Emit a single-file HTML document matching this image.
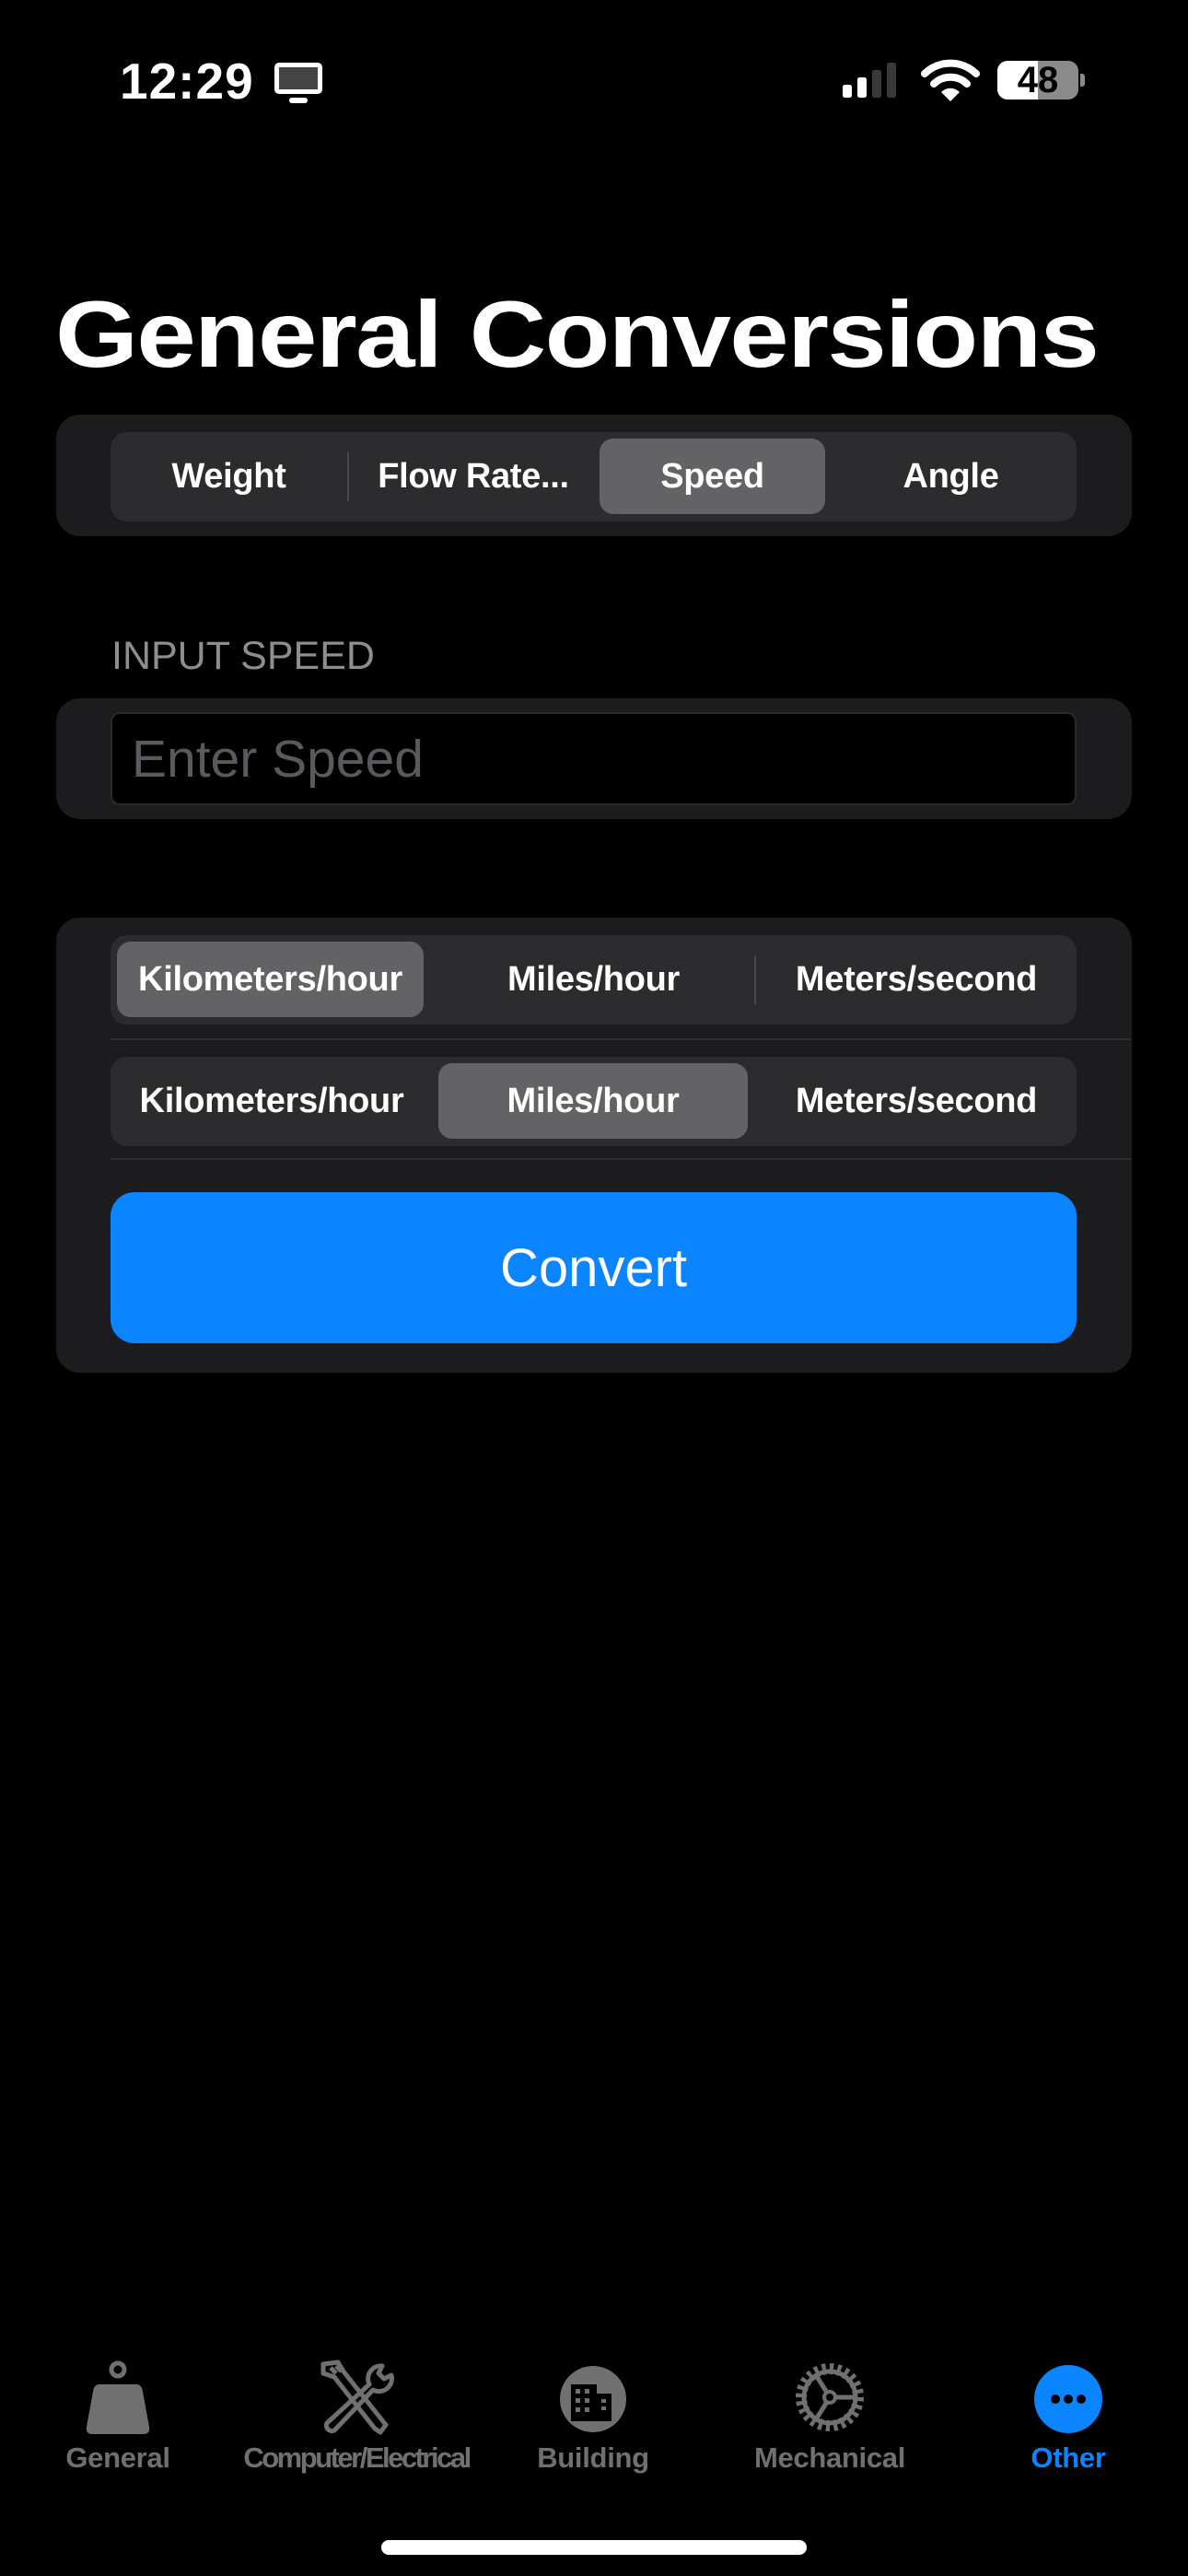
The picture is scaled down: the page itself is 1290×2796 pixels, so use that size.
<!DOCTYPE html>
<html><head><meta charset="utf-8"><style>
*{margin:0;padding:0;box-sizing:border-box}
body{width:1290px;height:2796px;background:#000;font-family:"Liberation Sans",sans-serif;color:#fff;position:relative;overflow:hidden}
.abs{position:absolute}
.card{position:absolute;left:61px;width:1168px;background:#1c1c1e;border-radius:26px}
.seg{position:absolute;left:120px;width:1049px;background:#2c2c2e;border-radius:18px}
.sel{position:absolute;background:#636366;border-radius:15px}
.lbl{position:absolute;top:0;height:100%;display:flex;align-items:center;justify-content:center;font-size:38px;font-weight:bold;letter-spacing:-0.3px;white-space:nowrap}
.div{position:absolute;width:2px;background:#48484a}
.tab{position:absolute;top:2650px;font-size:31px;font-weight:bold;color:#707070;transform:translateX(-50%);white-space:nowrap;letter-spacing:-0.3px}
</style></head><body>
<div class="abs" style="left:130px;top:56px;font-size:55px;font-weight:bold;letter-spacing:1px">12:29</div>
<svg class="abs" style="left:296px;top:66px" width="56" height="48" viewBox="0 0 56 48"><rect x="2" y="2" width="52" height="34" rx="5" fill="#fff"/><rect x="7" y="7" width="42" height="24" fill="#444"/><rect x="18" y="40" width="20" height="6" rx="3" fill="#fff"/></svg>
<svg class="abs" style="left:913px;top:68px" width="70" height="40"><rect x="2" y="24" width="10" height="14" rx="2.5" fill="#fff"/><rect x="18" y="16" width="10" height="22" rx="2.5" fill="#fff"/><rect x="34" y="8" width="10" height="30" rx="2.5" fill="#3a3a3a"/><rect x="50" y="0" width="10" height="38" rx="2.5" fill="#3a3a3a"/></svg>
<svg class="abs" style="left:1000px;top:64px" width="64" height="48" viewBox="0 0 64 48"><path d="M4 16 A40 40 0 0 1 60 16" stroke="#fff" stroke-width="8" fill="none" stroke-linecap="round"/><path d="M14 27 A26 26 0 0 1 50 27" stroke="#fff" stroke-width="8" fill="none" stroke-linecap="round"/><path d="M32 46 L22 36 A14 14 0 0 1 42 36 Z" fill="#fff"/></svg>
<div class="abs" style="left:1083px;top:66px;width:88px;height:42px;border-radius:11px;background:#8a8a8a;overflow:hidden"><div style="width:44px;height:42px;background:#fff"></div></div>
<div class="abs" style="left:1083px;top:66px;width:88px;height:42px;font-size:40px;font-weight:bold;color:#000;text-align:center;line-height:42px">48</div>
<div class="abs" style="left:1173px;top:80px;width:5px;height:14px;border-radius:0 3px 3px 0;background:#8a8a8a"></div>

<div class="abs" style="left:60px;top:303px;font-size:102px;font-weight:bold;letter-spacing:-1.5px;line-height:120px;white-space:nowrap;transform:scaleX(1.135);transform-origin:0 0">General Conversions</div>

<div class="card" style="top:450px;height:132px"></div>
<div class="seg" style="top:469px;height:97px">
 <div class="sel" style="left:531px;top:7px;width:245px;height:82px"></div>
 <div class="div" style="left:257px;top:22px;height:53px"></div>
 <div class="lbl" style="left:0;width:257px">Weight</div>
 <div class="lbl" style="left:259px;width:270px">Flow Rate...</div>
 <div class="lbl" style="left:531px;width:245px">Speed</div>
 <div class="lbl" style="left:776px;width:273px">Angle</div>
</div>

<div class="abs" style="left:121px;top:688px;font-size:43px;color:#8d8d92">INPUT SPEED</div>
<div class="card" style="top:758px;height:131px"></div>
<div class="abs" style="left:120px;top:773px;width:1049px;height:101px;background:#000;border:2px solid #2a2a2c;border-radius:10px"></div>
<div class="abs" style="left:143px;top:791px;font-size:57px;color:#5a5a5e">Enter Speed</div>

<div class="card" style="top:996px;height:494px"></div>
<div class="seg" style="top:1015px;height:97px">
 <div class="sel" style="left:7px;top:7px;width:333px;height:82px"></div>
 <div class="div" style="left:699px;top:22px;height:53px"></div>
 <div class="lbl" style="left:7px;width:333px">Kilometers/hour</div>
 <div class="lbl" style="left:350px;width:349px">Miles/hour</div>
 <div class="lbl" style="left:701px;width:348px">Meters/second</div>
</div>
<div class="abs" style="left:120px;top:1127px;width:1109px;height:2px;background:#2e2e30"></div>
<div class="seg" style="top:1147px;height:97px">
 <div class="sel" style="left:356px;top:7px;width:336px;height:82px"></div>
 <div class="lbl" style="left:0;width:350px">Kilometers/hour</div>
 <div class="lbl" style="left:356px;width:336px">Miles/hour</div>
 <div class="lbl" style="left:701px;width:348px">Meters/second</div>
</div>
<div class="abs" style="left:120px;top:1257px;width:1109px;height:2px;background:#2e2e30"></div>
<div class="abs" style="left:120px;top:1294px;width:1049px;height:164px;background:#0a84ff;border-radius:26px;display:flex;align-items:center;justify-content:center;font-size:58px">Convert</div>

<!-- tab bar -->
<svg class="abs" style="left:92px;top:2560px" width="72" height="84" viewBox="0 0 72 84"><circle cx="36" cy="12" r="7" stroke="#707070" stroke-width="5" fill="none"/><path d="M16 28 H56 Q62 28 63 36 L70 74 Q71 82 64 82 H8 Q1 82 2 74 L9 36 Q10 28 16 28Z" fill="#707070"/></svg>
<svg class="abs" style="left:345px;top:2560px" width="84" height="84" viewBox="0 0 84 84" fill="none" stroke="#707070" stroke-width="5" stroke-linejoin="round"><path d="M6 6 L22 4 L28 14 L74 72 L68 80 L62 76 L18 20 L6 16Z"/><path d="M14 10 L20 16 M20 8 L26 14"/><path d="M70 8 A14 14 0 0 0 56 28 L10 70 A6 6 0 0 0 18 78 L60 34 A14 14 0 0 0 80 18 L72 22 L66 16Z"/></svg>
<svg class="abs" style="left:606px;top:2566px" width="76" height="76" viewBox="0 0 76 76"><circle cx="38" cy="38" r="36" fill="#707070"/><rect x="14" y="22" width="28" height="40" fill="#000"/><rect x="42" y="32" width="16" height="30" fill="#000"/><g fill="#707070"><rect x="19" y="27" width="5" height="5"/><rect x="29" y="27" width="5" height="5"/><rect x="19" y="37" width="5" height="5"/><rect x="29" y="37" width="5" height="5"/><rect x="19" y="47" width="5" height="5"/><rect x="29" y="47" width="5" height="5"/><rect x="47" y="38" width="5" height="4"/><rect x="47" y="46" width="5" height="4"/></g></svg>
<svg class="abs" style="left:861px;top:2562px" width="80" height="80" viewBox="0 0 80 80" fill="none" stroke="#707070"><circle cx="40" cy="40" r="31" stroke-width="12" stroke-dasharray="4 4.1"/><circle cx="40" cy="40" r="28" stroke-width="5"/><circle cx="40" cy="40" r="6" stroke-width="4"/><path d="M46 40 H68 M37 35 L25 16 M37 45 L25 64" stroke-width="5"/></svg>
<svg class="abs" style="left:1122px;top:2566px" width="76" height="76"><circle cx="38" cy="38" r="37" fill="#0a84ff"/><circle cx="24" cy="38" r="5" fill="#000"/><circle cx="38" cy="38" r="5" fill="#000"/><circle cx="52" cy="38" r="5" fill="#000"/></svg>
<div class="tab" style="left:128px">General</div>
<div class="tab" style="left:387px;letter-spacing:-2.5px">Computer/Electrical</div>
<div class="tab" style="left:644px">Building</div>
<div class="tab" style="left:901px">Mechanical</div>
<div class="tab" style="left:1160px;color:#0a84ff">Other</div>
<div class="abs" style="left:414px;top:2757px;width:462px;height:16px;border-radius:8px;background:#fff"></div>
</body></html>
